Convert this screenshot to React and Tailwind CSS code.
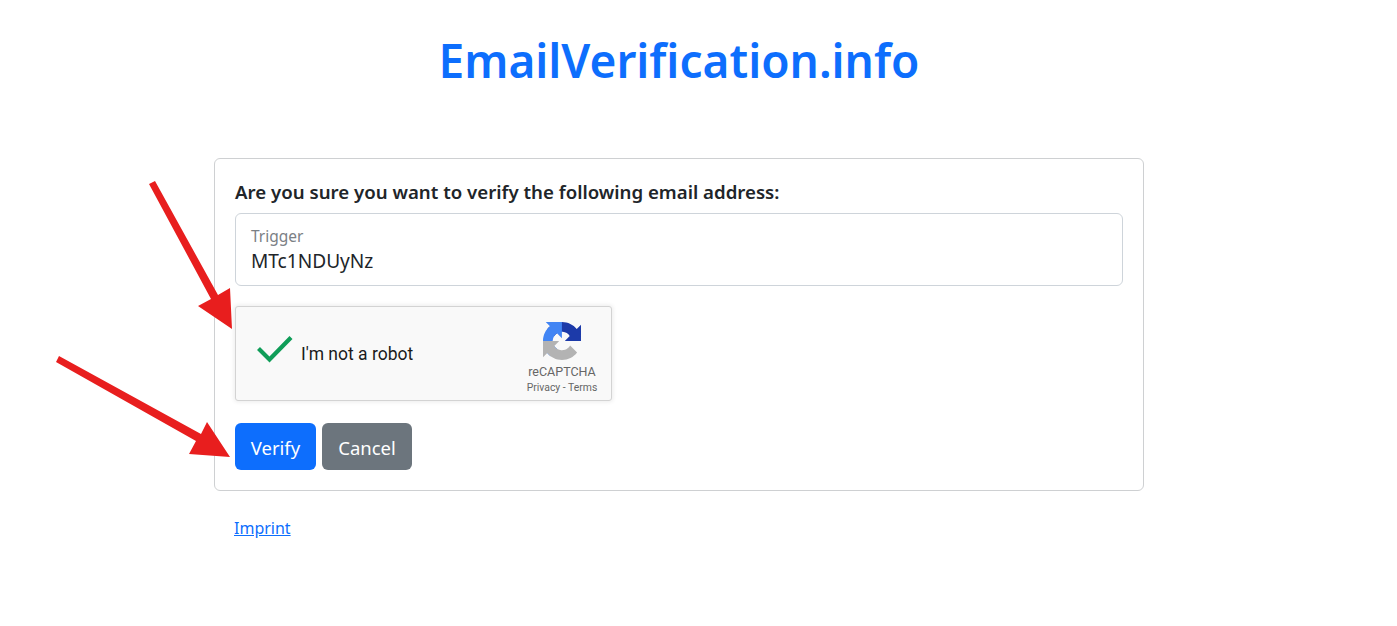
export default function App() {
  return (
    <div className="relative h-[626px] bg-white overflow-hidden font-['Noto_Sans',sans-serif] text-[#212529]">
      <div className="ml-[214px] w-[930px]">
        <h1 className="pt-[27px] h-[158px] text-center text-[46px] leading-[66px] font-semibold text-[#0d6efd]">EmailVerification.info</h1>
        <div className="h-[333px] border border-[#ced0d2] rounded-[6px] px-5 pt-5">
          <p className="h-[34px] text-[18.65px] leading-[26px] font-semibold">Are you sure you want to verify the following email address:</p>
          <div className="h-[73px] border border-[#ced4da] rounded-[6px] pl-[15px] pt-[11px]">
            <div className="text-[15.5px] leading-[22px] text-[#7b8085]">Trigger</div>
            <div className="text-[19.1px] leading-[28px]">MTc1NDUyNz</div>
          </div>
          <div className="mt-5 w-[377px] h-[95px] flex items-center justify-between bg-[#f9f9f9] border border-[#d3d3d3] rounded-[3px] shadow-[0_0_4px_1px_rgba(0,0,0,0.08)] font-['Roboto',sans-serif]">
            <div className="flex items-center">
              <svg viewBox="0 0 38 30" className="ml-[20px] mb-[10px] w-[38px] h-[30px]">
                <path d="M2.5 14.5 L13.5 25.5 L35 3.5" fill="none" stroke="#0f9d58" strokeWidth="4.2" />
              </svg>
              <span className="ml-[7px] mt-[1px] text-[17.5px] leading-[20px] text-[#1b1b1b]">I'm not a robot</span>
            </div>
            <div className="w-[84px] mr-[7px] mt-[9px] flex flex-col items-center text-[#666]">
              <svg viewBox="0 0 64 64" className="w-[38px] h-[38px]">
                <path d="M64 31.955l-.033-1.37V4.687l-7.16 7.16C50.948 4.674 42.033.093 32.05.093c-10.4 0-19.622 4.96-25.458 12.64l11.736 11.86a15.55 15.55 0 0 1 4.754-5.334c2.05-1.6 4.952-2.906 8.968-2.906.485 0 .86.057 1.135.163 4.976.393 9.29 3.14 11.83 7.125l-8.307 8.307 26.3-.002" fill="#1c3aa9" />
                <path d="M31.862.094l-1.37.033H4.594l7.16 7.16C4.58 13.147 0 22.06 0 32.046c0 10.4 4.96 19.622 12.64 25.458l11.86-11.736a15.55 15.55 0 0 1-5.334-4.754c-1.6-2.05-2.906-4.952-2.906-8.968 0-.485.057-.86.163-1.135.393-4.976 3.14-9.29 7.125-11.83l8.307 8.307-.002-26.3" fill="#4285f4" />
                <path d="M.001 32.045l.033 1.37v25.898l7.16-7.16c5.86 7.173 14.774 11.754 24.76 11.754 10.4 0 19.622-4.96 25.458-12.64L45.676 39.407a15.55 15.55 0 0 1-4.754 5.334c-2.05 1.6-4.952 2.906-8.968 2.906-.485 0-.86-.057-1.135-.163-4.976-.393-9.29-3.14-11.83-7.125l8.307-8.307-26.3.002" fill="#b3b3b3" />
              </svg>
              <div className="mt-[5px] text-[12.5px] leading-[14px]">reCAPTCHA</div>
              <div className="mt-[3px] text-[10.4px] leading-[12px] whitespace-nowrap">Privacy - Terms</div>
            </div>
          </div>
          <div className="mt-[22px] flex gap-[6px]">
            <button className="w-[81px] h-[47px] pt-[3px] bg-[#0d6efd] text-white text-[18.5px] rounded-[6px]">Verify</button>
            <button className="w-[90px] h-[47px] pt-[3px] bg-[#6c757d] text-white text-[18.5px] rounded-[6px]">Cancel</button>
          </div>
        </div>
        <a href="#" className="inline-block ml-5 mt-[24px] text-[16px] leading-[26px] text-[#0d6efd] underline">Imprint</a>
      </div>
      <svg className="absolute left-0 top-0 w-[300px] h-[500px] pointer-events-none" viewBox="0 0 300 500">
        <path d="M149 184 L155 181 L218 295 L230 288 L232 329 L198 306 L211 299 Z" fill="#e81e1e" />
        <path d="M56 362 L59 356 L201 434 L207 422 L230 457 L189 454 L196 441 Z" fill="#e81e1e" />
      </svg>
    </div>
  );
}
